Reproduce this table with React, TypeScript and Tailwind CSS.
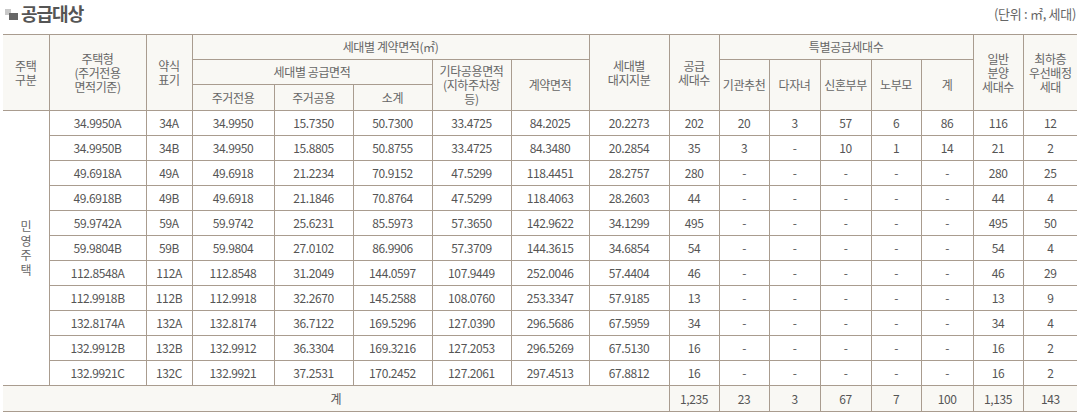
import React from "react";

const ROWS = [
  ["34.9950A", "34A", "34.9950", "15.7350", "50.7300", "33.4725", "84.2025", "20.2273", "202", "20", "3", "57", "6", "86", "116", "12"],
  ["34.9950B", "34B", "34.9950", "15.8805", "50.8755", "33.4725", "84.3480", "20.2854", "35", "3", "-", "10", "1", "14", "21", "2"],
  ["49.6918A", "49A", "49.6918", "21.2234", "70.9152", "47.5299", "118.4451", "28.2757", "280", "-", "-", "-", "-", "-", "280", "25"],
  ["49.6918B", "49B", "49.6918", "21.1846", "70.8764", "47.5299", "118.4063", "28.2603", "44", "-", "-", "-", "-", "-", "44", "4"],
  ["59.9742A", "59A", "59.9742", "25.6231", "85.5973", "57.3650", "142.9622", "34.1299", "495", "-", "-", "-", "-", "-", "495", "50"],
  ["59.9804B", "59B", "59.9804", "27.0102", "86.9906", "57.3709", "144.3615", "34.6854", "54", "-", "-", "-", "-", "-", "54", "4"],
  ["112.8548A", "112A", "112.8548", "31.2049", "144.0597", "107.9449", "252.0046", "57.4404", "46", "-", "-", "-", "-", "-", "46", "29"],
  ["112.9918B", "112B", "112.9918", "32.2670", "145.2588", "108.0760", "253.3347", "57.9185", "13", "-", "-", "-", "-", "-", "13", "9"],
  ["132.8174A", "132A", "132.8174", "36.7122", "169.5296", "127.0390", "296.5686", "67.5959", "34", "-", "-", "-", "-", "-", "34", "4"],
  ["132.9912B", "132B", "132.9912", "36.3304", "169.3216", "127.2053", "296.5269", "67.5130", "16", "-", "-", "-", "-", "-", "16", "2"],
  ["132.9921C", "132C", "132.9921", "37.2531", "170.2452", "127.2061", "297.4513", "67.8812", "16", "-", "-", "-", "-", "-", "16", "2"],
];

const TOTALS = ["1,235", "23", "3", "67", "7", "100", "1,135", "143"];

const WIDTHS = [46, 97, 46, 82, 79, 79, 79, 78, 80, 50, 50, 51, 51, 50, 52, 50, 54];

const th = "border-r border-b border-[#a99c8f] bg-[#f9f8f4] font-normal text-[#666] leading-[14px] align-middle";
const td = "h-[25px] border-r border-b border-[#a99c8f] text-center align-middle";

export default function App() {
  return (
    <div
      className="w-[1077px] h-[418px] bg-white text-[#555] overflow-hidden"
      style={{ fontFamily: '"Noto Sans CJK KR", "Noto Sans", sans-serif' }}
    >
      <div className="flex justify-between h-[34px]">
        <div className="flex items-center gap-[2px] pl-[5px] self-start pt-[1px] h-[24px]">
          <svg width="14" height="12" viewBox="0 0 14 12" className="mt-[2px]">
            <rect x="0" y="1" width="6" height="6" fill="#c9c9c9" />
            <rect x="4" y="5" width="9" height="7" fill="#666" />
          </svg>
          <span className="text-[18px] leading-[22px] font-bold tracking-[-1px] text-[#555]">공급대상</span>
        </div>
        <div className="self-start pt-[5px] text-[13px] leading-[17px] tracking-[-0.3px] text-[#666] pr-[1px]">(단위 : ㎡, 세대)</div>
      </div>

      <table className="ml-[3px] border-collapse table-fixed text-[12px] tracking-[-0.4px] text-[#555]" style={{ width: 1074 }}>
        <colgroup>
          {WIDTHS.map((w, i) => (
            <col key={i} style={{ width: w }} />
          ))}
        </colgroup>
        <thead>
          <tr className="h-[25px]">
            <th rowSpan={3} className={`${th} border-t`}>주택<br />구분</th>
            <th rowSpan={3} className={`${th} border-t`}>주택형<br />(주거전용<br />면적기준)</th>
            <th rowSpan={3} className={`${th} border-t`}>약식<br />표기</th>
            <th colSpan={5} className={`${th} border-t`}>세대별 계약면적(㎡)</th>
            <th rowSpan={3} className={`${th} border-t`}>세대별<br />대지지분</th>
            <th rowSpan={3} className={`${th} border-t`}>공급<br />세대수</th>
            <th colSpan={5} className={`${th} border-t`}>특별공급세대수</th>
            <th rowSpan={3} className={`${th} border-t`}>일반<br />분양<br />세대수</th>
            <th rowSpan={3} className={`${th} border-t border-r-0`}>최하층<br />우선배정<br />세대</th>
          </tr>
          <tr className="h-[25px]">
            <th colSpan={3} className={th}>세대별 공급면적</th>
            <th rowSpan={2} className={th}>기타공용면적<br />(지하주차장<br />등)</th>
            <th rowSpan={2} className={th}>계약면적</th>
            <th rowSpan={2} className={th}>기관추천</th>
            <th rowSpan={2} className={th}>다자녀</th>
            <th rowSpan={2} className={th}>신혼부부</th>
            <th rowSpan={2} className={th}>노부모</th>
            <th rowSpan={2} className={th}>계</th>
          </tr>
          <tr className="h-[26px]">
            <th className={th}>주거전용</th>
            <th className={th}>주거공용</th>
            <th className={th}>소계</th>
          </tr>
        </thead>
        <tbody>
          {ROWS.map((r, i) => (
            <tr key={i}>
              {i === 0 && (
                <td rowSpan={ROWS.length} className="border-r border-b border-[#a99c8f] text-center align-middle text-[#666] leading-[14.5px]">
                  민<br />영<br />주<br />택
                </td>
              )}
              {r.map((v, j) => (
                <td key={j} className={`${td} ${j === r.length - 1 ? "border-r-0" : ""}`}>
                  {v}
                </td>
              ))}
            </tr>
          ))}
          <tr className="bg-[#f9f8f4]">
            <td colSpan={9} className={`${td} h-[26px]`}>계</td>
            {TOTALS.map((v, j) => (
              <td key={j} className={`${td} h-[26px] ${j === TOTALS.length - 1 ? "border-r-0" : ""}`}>
                {v}
              </td>
            ))}
          </tr>
        </tbody>
      </table>
    </div>
  );
}
